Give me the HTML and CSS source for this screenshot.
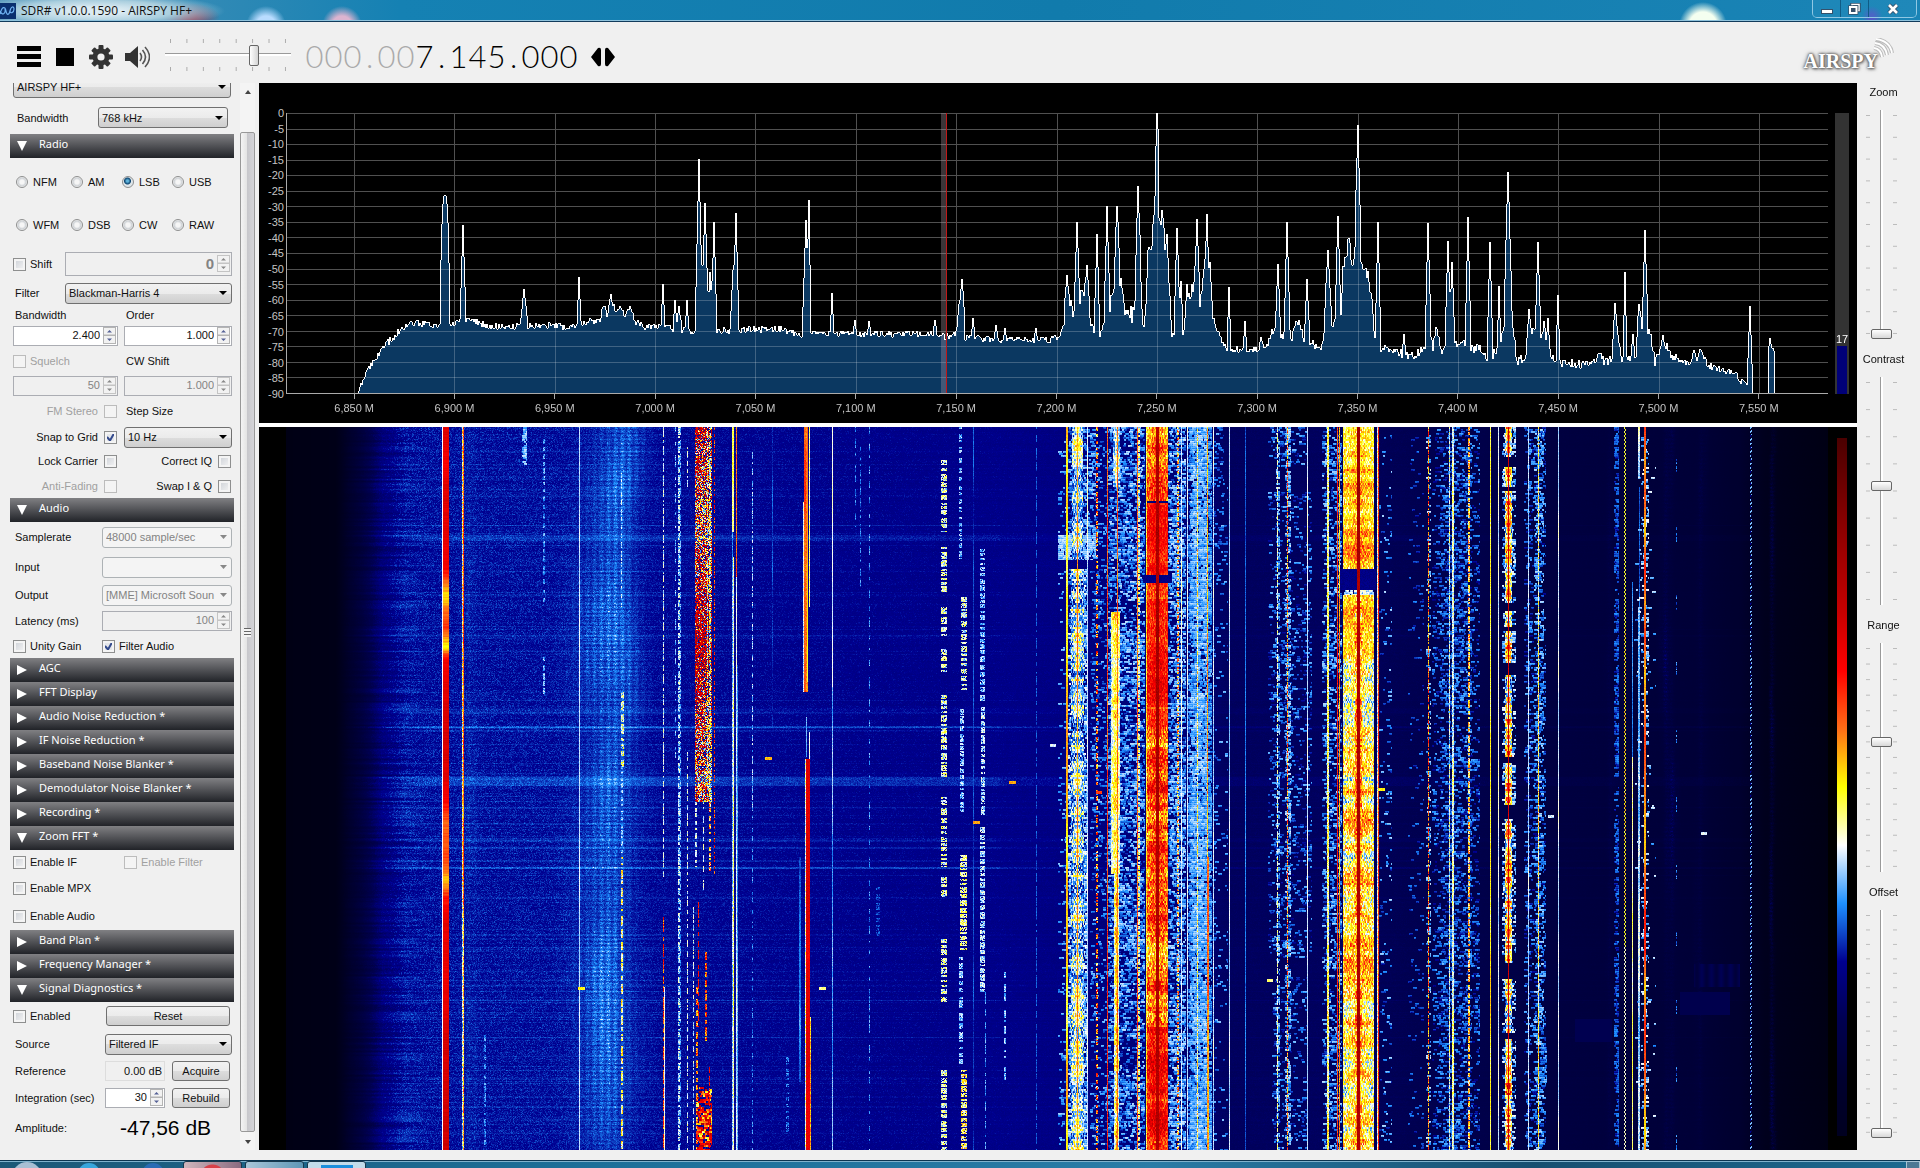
FILE: index.html
```html
<!DOCTYPE html>
<html lang="en">
<head>
<meta charset="utf-8">
<title>SDR# v1.0.0.1590 - AIRSPY HF+</title>
<link rel="stylesheet" href="styles.css">
</head>
<body>
<header class="titlebar">
  <svg class="app-icon" viewBox="0 0 16 16" aria-hidden="true"><rect width="16" height="16" fill="#0a2f6e"/><path d="M0 11 C2 3 5 3 6 8 C7 13 9 12 10 8 C11 3 14 3 14 6 C14 10 10 11 10 8 M0 8 C2 13 6 11 5 6" fill="none" stroke="#6fb2f2" stroke-width="1.2"/></svg>
  <h1 class="title">SDR# v1.0.0.1590 - AIRSPY HF+</h1>
  <div class="window-buttons">
    <button type="button" aria-label="Minimize"><svg width="12" height="12" viewBox="0 0 12 12"><rect x=".5" y="6.500" width="11" height="4" fill="#fff" stroke="#35506a"/></svg></button>
    <button type="button" aria-label="Restore"><svg width="13" height="12" viewBox="0 0 13 12"><rect x="4" y="1.500" width="7" height="6" fill="none" stroke="#35506a" stroke-width="3.500"/><rect x="4" y="1.500" width="7" height="6" fill="none" stroke="#fff" stroke-width="1.500"/><rect x="2" y="4" width="6.500" height="6" fill="#35506a" stroke="#35506a" stroke-width="3.500"/><rect x="2" y="4" width="6.500" height="6" fill="#35506a" stroke="#fff" stroke-width="2"/></svg></button>
    <button type="button" class="close" aria-label="Close"><svg width="12" height="12" viewBox="0 0 12 12"><path d="M2 2 L10 10 M10 2 L2 10" stroke="#35506a" stroke-width="4.500"/><path d="M2 2 L10 10 M10 2 L2 10" stroke="#fff" stroke-width="2.600"/></svg></button>
  </div>
</header>

<div class="toolbar">
  <button type="button" class="tool menu" aria-label="Menu"><svg width="24" height="22" viewBox="0 0 24 22"><path d="M0 0h24v5H0zM0 8h24v5H0zM0 16h24v5H0z"/></svg></button>
  <button type="button" class="tool stop" aria-label="Stop"><svg width="18" height="18" viewBox="0 0 18 18"><rect width="18" height="18"/></svg></button>
  <button type="button" class="tool gear" aria-label="Settings"><svg width="24" height="24" viewBox="-12 -12 24 24" fill="#333"><g><rect x="-2.500" y="-12" width="5" height="24" rx="1"/><rect x="-12" y="-2.500" width="24" height="5" rx="1"/></g><g transform="rotate(45)"><rect x="-2.500" y="-11.500" width="5" height="23" rx="1"/><rect x="-11.500" y="-2.500" width="23" height="5" rx="1"/></g><circle r="8.500"/><circle r="3.600" fill="#f0f0f0"/></svg></button>
  <button type="button" class="tool sound" aria-label="Mute"><svg width="25" height="24" viewBox="0 0 25 24"><path d="M0 8h5l8-7v22l-8-7H0z" fill="#333"/><path d="M15 8q3 4 0 8M17.500 5q6 7 0 14M20 2q9 10 0 20" fill="none" stroke="#555" stroke-width="1.600"/></svg></button>
  <div class="volume">
    <span class="hticks"></span>
    <input type="range" aria-label="Volume" min="0" max="100" value="72">
    <span class="hticks"></span>
  </div>
  <output class="frequency" aria-label="Frequency"><span class="off"><b>0</b><b>0</b><b>0</b><i>.</i><b>0</b><b>0</b></span><span><b>7</b><i>.</i><b>1</b><b>4</b><b>5</b><i>.</i><b>0</b><b>0</b><b>0</b></span></output>
  <button type="button" class="tool" aria-label="Tuning mode"><svg width="24" height="20" viewBox="0 0 24 20"><path d="M0 10 L7 1 Q10 0 10 3 V17 Q10 20 7 19zM24 10 L17 1 Q14 0 14 3 V17 Q14 20 17 19z"/></svg></button>
  <a class="logo" href="#airspy" aria-label="Airspy"><span>AIRSPY</span><svg width="22" height="20" viewBox="0 0 22 20"><g fill="none" stroke="#888" stroke-width="4" opacity=".5"><path d="M1 10q7 1 8 9M2 5q10 1 12 12M3 1q14 2 16 14"/></g><g fill="none" stroke="#fff" stroke-width="1.800"><path d="M1 10q7 1 8 9M2 5q10 1 12 12M3 1q14 2 16 14"/></g></svg></a>
</div>

<main class="workspace">
  <aside class="sidebar">
    <form class="panels">
      <section class="source">
        <select class="wide" aria-label="Source device"><option>AIRSPY HF+</option></select>
        <div class="row r36"><label for="src-bw">Bandwidth</label><select id="src-bw"><option>768 kHz</option></select></div>
      </section>

      <section>
        <button type="button" class="head open">Radio</button>
        <div class="modes">
          <label><input type="radio" name="mode">NFM</label><label><input type="radio" name="mode">AM</label><label><input type="radio" name="mode" checked>LSB</label><label><input type="radio" name="mode">USB</label>
          <label><input type="radio" name="mode">WFM</label><label><input type="radio" name="mode">DSB</label><label><input type="radio" name="mode">CW</label><label><input type="radio" name="mode">RAW</label>
        </div>
        <div class="row c65 r36"><label class="check"><input type="checkbox">Shift</label><input class="spin tall" type="text" aria-label="Shift frequency" value="0" disabled></div>
        <div class="row c65 r22"><label for="filter">Filter</label><select id="filter"><option>Blackman-Harris 4</option></select></div>
        <div class="row half r22"><label for="bw">Bandwidth</label><label for="order" class="in">Order</label></div>
        <div class="row half r20"><input class="spin" id="bw" type="text" value="2.400"><input class="spin" id="order" type="text" value="1.000"></div>
        <div class="row half r30"><label class="check off"><input type="checkbox" disabled>Squelch</label><label for="cw" class="in">CW Shift</label></div>
        <div class="row half r20"><input class="spin" type="text" aria-label="Squelch level" value="50" disabled><input class="spin" id="cw" type="text" value="1.000" disabled></div>
        <div class="row half r30"><label class="check after off">FM Stereo<input type="checkbox" disabled></label><label for="step" class="in">Step Size</label></div>
        <div class="row half r22"><label class="check after">Snap to Grid<input type="checkbox" checked></label><select id="step"><option>10 Hz</option></select></div>
        <div class="row half r26"><label class="check after">Lock Carrier<input type="checkbox"></label><label class="check after">Correct IQ<input type="checkbox"></label></div>
        <div class="row half r24"><label class="check after off">Anti-Fading<input type="checkbox" disabled></label><label class="check after">Swap I &amp; Q<input type="checkbox"></label></div>
      </section>

      <section>
        <button type="button" class="head open">Audio</button>
        <div class="row c102 r30"><label for="rate">Samplerate</label><select id="rate" disabled><option>48000 sample/sec</option></select></div>
        <div class="row c102 r30"><label for="ain">Input</label><select id="ain" disabled><option></option></select></div>
        <div class="row c102 r26"><label for="aout">Output</label><select id="aout" disabled><option>[MME] Microsoft Soun</option></select></div>
        <div class="row c102 r26"><label for="lat">Latency (ms)</label><input class="spin" id="lat" type="text" value="100" disabled></div>
        <div class="row c102 r24"><label class="check"><input type="checkbox">Unity Gain</label><label class="check"><input type="checkbox" checked>Filter Audio</label></div>
      </section>

      <section>
        <button type="button" class="head">AGC</button>
        <button type="button" class="head">FFT Display</button>
        <button type="button" class="head">Audio Noise Reduction *</button>
        <button type="button" class="head">IF Noise Reduction *</button>
        <button type="button" class="head">Baseband Noise Blanker *</button>
        <button type="button" class="head">Demodulator Noise Blanker *</button>
        <button type="button" class="head">Recording *</button>
      </section>

      <section>
        <button type="button" class="head open">Zoom FFT *</button>
        <div class="row half r24"><label class="check"><input type="checkbox">Enable IF</label><label class="check off"><input type="checkbox" disabled>Enable Filter</label></div>
        <div class="row r28"><label class="check"><input type="checkbox">Enable MPX</label></div>
        <div class="row r28"><label class="check"><input type="checkbox">Enable Audio</label></div>
      </section>

      <section>
        <button type="button" class="head">Band Plan *</button>
        <button type="button" class="head">Frequency Manager *</button>
      </section>

      <section>
        <button type="button" class="head open">Signal Diagnostics *</button>
        <div class="row c105 r28"><label class="check"><input type="checkbox">Enabled</label><button type="button" class="push">Reset</button></div>
        <div class="row c105 r28"><label for="diag">Source</label><select id="diag"><option>Filtered IF</option></select></div>
        <div class="row c105b r26"><label for="ref">Reference</label><input class="plain" id="ref" type="text" value="0.00 dB" readonly><button type="button" class="push">Acquire</button></div>
        <div class="row c105b r28"><label for="integ">Integration (sec)</label><input class="spin" id="integ" type="text" value="30"><button type="button" class="push">Rebuild</button></div>
        <div class="row c105 r32"><label for="amp">Amplitude:</label><output class="amplitude" id="amp">-47,56 dB</output></div>
      </section>
    </form>
    <div class="scrollbar" aria-hidden="true"><span class="arrow up"></span><span class="thumb"></span><span class="arrow down"></span></div>
  </aside>

  <div class="displays">
    <section class="spectrum" aria-label="Spectrum">
      <div class="db-scale"><span>0</span><span>-5</span><span>-10</span><span>-15</span><span>-20</span><span>-25</span><span>-30</span><span>-35</span><span>-40</span><span>-45</span><span>-50</span><span>-55</span><span>-60</span><span>-65</span><span>-70</span><span>-75</span><span>-80</span><span>-85</span><span>-90</span></div>
      <canvas id="spectrum" width="1542" height="281"></canvas>
      <div class="meter"><span>17</span><i></i></div>
      <div class="freq-scale"><span>6,850 M</span><span>6,900 M</span><span>6,950 M</span><span>7,000 M</span><span>7,050 M</span><span>7,100 M</span><span>7,150 M</span><span>7,200 M</span><span>7,250 M</span><span>7,300 M</span><span>7,350 M</span><span>7,400 M</span><span>7,450 M</span><span>7,500 M</span><span>7,550 M</span></div>
    </section>
    <section class="waterfall" aria-label="Waterfall">
      <div class="canvas-box"><canvas id="waterfall" width="1542" height="723"></canvas></div>
      <div class="palette"></div>
    </section>
  </div>

  <aside class="levels">
    <div class="level s10"><label for="zoom">Zoom</label><span class="vticks"></span><input id="zoom" type="range" min="0" max="100" value="0"><span class="vticks"></span></div>
    <div class="level s8"><label for="contrast">Contrast</label><span class="vticks"></span><input id="contrast" type="range" min="0" max="100" value="52"><span class="vticks"></span></div>
    <div class="level s14"><label for="range">Range</label><span class="vticks"></span><input id="range" type="range" min="0" max="100" value="57"><span class="vticks"></span></div>
    <div class="level s15"><label for="offset">Offset</label><span class="vticks"></span><input id="offset" type="range" min="0" max="100" value="0"><span class="vticks"></span></div>
  </aside>
</main>

<footer class="taskbar">
  <button type="button" class="orb" aria-label="Start"></button>
  <button type="button" class="dot ie" aria-label="Browser"></button>
  <button type="button" class="dot bird" aria-label="Mail"></button>
  <button type="button" class="task red" aria-label="Opera"></button>
  <button type="button" class="task" aria-label="Explorer"></button>
  <button type="button" class="task active" aria-label="SDR#"></button>
  <span class="show-desktop"></span>
</footer>
<script src="app.js"></script>
</body>
</html>
```
FILE: styles.css
```css
* { box-sizing: border-box; }

body {
  margin: 0;
  height: 100vh;
  display: flex;
  flex-direction: column;
  overflow: hidden;
  background: #f0f0f0;
  color: #111;
  font: 11px/14px "Liberation Sans", Arial, sans-serif;
}

button, input, select { font: inherit; color: inherit; margin: 0; }

/* title bar */
.titlebar {
  flex: none;
  height: 22px;
  display: flex;
  align-items: center;
  gap: 5px;
  border-bottom: 1px solid #123c5c;
  box-shadow: inset 0 -1px #8fc3dd;
  background:
    radial-gradient(circle at 266px 26px, #b9dcff 10px, transparent 20px),
    radial-gradient(circle at 342px 26px, #dcb4d0 10px, transparent 20px),
    radial-gradient(circle at 1703px 26px, #f4fff0 14px, transparent 24px),
    radial-gradient(circle at 1872px 16px, #5a52c8 2px, transparent 10px),
    radial-gradient(130px 18px at 95px 11px, #dcebf2 20%, #a9cede 60%, transparent),
    radial-gradient(30px 14px at 190px 17px, #8d4a62 20%, transparent),
    linear-gradient(90deg, #4f93b8 0, #1581b3 400px, #117bac 55%, #1a84b6);
}
.app-icon { width: 16px; height: 16px; }
.title { margin: 0; flex: 1; font: 400 12px/18px "Open Sans", sans-serif; }
.window-buttons {
  align-self: flex-start;
  display: flex;
  height: 18px;
  margin-right: 3px;
  border: 1px solid #8fc8e4;
  border-top: 0;
  border-radius: 0 0 5px 5px;
}
.window-buttons button {
  width: 28px;
  padding: 0;
  border: 0;
  border-right: 1px solid #0f5c86;
  background: #2a8fbf55;
  display: grid;
  place-items: center;
}
.window-buttons .close { width: 47px; border-right: 0; }

/* toolbar */
.toolbar {
  flex: none;
  height: 61px;
  display: flex;
  align-items: center;
  padding: 9px 25px 0 17px;
}
.tool { padding: 0; border: 0; background: none; display: grid; }
.menu { margin-right: 15px; }
.stop { margin-right: 15px; }
.gear { margin-right: 12px; }
.sound { margin-right: 15px; }
.volume { width: 126px; margin: 0 14px 4px 0; display: grid; gap: 1px; }
.hticks {
  height: 4px;
  margin: 0 5px;
  background: linear-gradient(90deg, #aaa 1px, transparent 1px) 0 0 / calc((100% - 1px) / 7) 4px repeat-x;
}
.volume input {
  appearance: none;
  width: 100%;
  height: 22px;
  background: linear-gradient(#9a9a9a 1px, #fff 1px, #fff 3px, transparent 3px) 0 9px / 100% 4px no-repeat;
}
.volume input::-webkit-slider-thumb {
  appearance: none;
  width: 10px;
  height: 21px;
  border: 1px solid #666;
  border-radius: 2px;
  background: linear-gradient(90deg, #fff, #d4d4d4);
}
.frequency { display: flex; margin: 0 13px 2px 0; font: 300 31px/36px Lato, "Open Sans", sans-serif; color: #000; }
.frequency span { display: flex; }
.frequency .off { color: #aaa; }
.frequency b, .frequency i { width: 19px; font-weight: 300; font-style: normal; text-align: center; }
.frequency i { width: 15px; }
.logo {
  margin: 7px 0 0 auto;
  display: flex;
  align-items: center;
  color: #fff;
  text-decoration: none;
  font: 700 20px/22px "Liberation Serif", serif;
  text-shadow: 0 0 2px #666, 0 0 3px #666, 0 0 5px #777, 1px 1px 3px #666;
}
.logo svg { margin: -26px 0 0 -5px; }

/* workspace */
.workspace { flex: 1; min-height: 0; display: flex; padding-bottom: 10px; }
.sidebar { flex: none; width: 259px; display: flex; padding-left: 10px; }
.panels { width: 224px; overflow: hidden; }
.source { margin-top: -7px; padding: 0 3px; }
.source .wide { display: block; width: 218px; height: 22px; }
.source .row { grid-template-columns: 83px 130px; padding: 3px 0 0 2px; }
.row {
  display: grid;
  align-items: center;
  padding: 0 2px 0 3px;
}
.row > label { padding-left: 2px; }
.r20 { height: 20px; } .r22 { height: 22px; } .r24 { height: 24px; } .r26 { height: 26px; }
.r28 { height: 28px; } .r30 { height: 30px; } .r32 { height: 32px; } .r36 { height: 36px; }
.c65 { grid-template-columns: 52px 1fr; }
.half { grid-template-columns: 105px 1fr; column-gap: 6px; }
.half .in { padding-left: 2px; }
.c102 { grid-template-columns: 89px 1fr; }
.c105 { grid-template-columns: 92px 1fr; }
.c105b { grid-template-columns: 92px 60px 1fr; }
.c105b .push { margin-left: 7px; }
.row > .check { display: flex; align-items: center; gap: 4px; padding-left: 0; }
.row > .check.after { justify-content: flex-end; gap: 6px; padding-right: 1px; }
.off { color: #a0a0a0; }

.head {
  display: block;
  width: 100%;
  height: 24px;
  padding: 0 0 4px 29px;
  border: 0;
  text-align: left;
  color: #fff;
  font: 11px/20px "Noto Sans", "Open Sans", sans-serif;
  background:
    url("data:image/svg+xml,%3Csvg xmlns='http://www.w3.org/2000/svg' width='10' height='10'%3E%3Cpath d='M0 0L10 5L0 10z' fill='white'/%3E%3C/svg%3E") 7px 7px no-repeat,
    linear-gradient(#808083, #55565a 45%, #212328);
}
.head.open {
  background:
    url("data:image/svg+xml,%3Csvg xmlns='http://www.w3.org/2000/svg' width='10' height='10'%3E%3Cpath d='M0 0H10L5 10z' fill='white'/%3E%3C/svg%3E") 7px 7px no-repeat,
    linear-gradient(#808083, #55565a 45%, #212328);
}

.modes { display: grid; grid-template-columns: 55px 51px 50px 1fr; grid-auto-rows: 43px; padding: 2px 0 0 6px; }
.modes label { display: flex; align-items: center; gap: 5px; }
input[type="radio"], input[type="checkbox"] { appearance: none; flex: none; border: 1px solid #8e8f8f; }
input[type="radio"] {
  width: 12px;
  height: 12px;
  border-radius: 50%;
  background: radial-gradient(#f6f6f6 2px, #ccd0d4 4px, #f4f4f4 5px);
}
input[type="radio"]:checked { background: radial-gradient(circle at 45% 40%, #5fb4dc 1px, #0c4470 3px, #dfe6ea 4px); }
input[type="checkbox"] {
  width: 13px;
  height: 13px;
  background: linear-gradient(135deg, #cbcfd5, #f6f6f6);
  box-shadow: inset 0 0 0 2px #f4f4f4;
}
input[type="checkbox"]:checked {
  background: url("data:image/svg+xml,%3Csvg xmlns='http://www.w3.org/2000/svg' width='11' height='11'%3E%3Cpath d='M2 5L5 8.500L9 1.500' fill='none' stroke='%23334a8c' stroke-width='2'/%3E%3C/svg%3E") center no-repeat #e4e6ea;
}
input[type="checkbox"]:disabled { border-color: #bcbcbc; background: #f4f4f4; }

select {
  appearance: none;
  width: 100%;
  height: 21px;
  padding: 0 16px 0 3px;
  border: 1px solid #707070;
  border-radius: 3px;
  background:
    url("data:image/svg+xml,%3Csvg xmlns='http://www.w3.org/2000/svg' width='8' height='4'%3E%3Cpath d='M0 0H8L4 4z'/%3E%3C/svg%3E") right 4px center no-repeat,
    linear-gradient(#f2f2f2, #ebebeb 50%, #dddddd 50%, #cfcfcf);
}
select:disabled {
  opacity: 1;
  padding-right: 0;
  color: #838383;
  border-color: #adb2b5;
  background:
    url("data:image/svg+xml,%3Csvg xmlns='http://www.w3.org/2000/svg' width='7' height='4'%3E%3Cpath d='M0 0H7L3.500 4z' fill='%23888'/%3E%3C/svg%3E") right 4px center no-repeat,
    #f4f4f4;
}
.spin, .plain {
  width: 100%;
  height: 20px;
  padding: 0 17px 2px 2px;
  border: 1px solid #abadb3;
  text-align: right;
  background:
    url("data:image/svg+xml,%3Csvg xmlns='http://www.w3.org/2000/svg' width='14' height='18'%3E%3Crect x='.5' y='.5' width='12' height='7.500' fill='%23f2f2f2' stroke='%23b4b4b4'/%3E%3Crect x='.5' y='8.500' width='12' height='8' fill='%23f2f2f2' stroke='%23b4b4b4'/%3E%3Cpath d='M4 5.500L6.500 3L9 5.500zM4 11.500L6.500 14L9 11.500z' fill='%23556196'/%3E%3C/svg%3E") right 0 center no-repeat,
    #fff;
}
.spin:disabled {
  color: #838383;
  background:
    url("data:image/svg+xml,%3Csvg xmlns='http://www.w3.org/2000/svg' width='14' height='18'%3E%3Crect x='.5' y='.5' width='12' height='7.500' fill='%23f2f2f2' stroke='%23c4c4c4'/%3E%3Crect x='.5' y='8.500' width='12' height='8' fill='%23f2f2f2' stroke='%23c4c4c4'/%3E%3Cpath d='M4 5.500L6.500 3L9 5.500zM4 11.500L6.500 14L9 11.500z' fill='%23888'/%3E%3C/svg%3E") right 0 center no-repeat,
    #f0f0f0;
}
.tall { height: 24px; font-size: 15px; font-weight: 700; }
.plain { padding: 0 2px 0 0; border-color: #ddd; background: #f0f0f0; }
.push {
  height: 20px;
  margin: 0 2px 0 1px;
  padding: 0;
  border: 1px solid #707070;
  border-radius: 3px;
  background: linear-gradient(#f2f2f2, #ebebeb 50%, #dddddd 50%, #cfcfcf);
}
.amplitude { padding-left: 15px; font-size: 21px; line-height: 24px; color: #000; }

.scrollbar { width: 15px; margin-left: 6px; display: flex; flex-direction: column; background: #f4f4f4; }
.arrow { height: 49px; background: url("data:image/svg+xml,%3Csvg xmlns='http://www.w3.org/2000/svg' width='6' height='4'%3E%3Cpath d='M0 4H6L3 0z' fill='%23444'/%3E%3C/svg%3E") 5px 7px no-repeat; }
.arrow.down { height: 18px; background: url("data:image/svg+xml,%3Csvg xmlns='http://www.w3.org/2000/svg' width='6' height='4'%3E%3Cpath d='M0 0H6L3 4z' fill='%23444'/%3E%3C/svg%3E") 5px 8px no-repeat; }
.thumb {
  flex: 1;
  border: 1px solid #989898;
  border-radius: 2px;
  background:
    repeating-linear-gradient(#666 0 1px, #f4f4f4 1px 3px) center / 7px 9px no-repeat,
    linear-gradient(90deg, #f4f4f4, #e4e4e4 45%, #c8c8cc 50%, #d4d4d8);
}

/* displays */
.displays { flex: 1; min-width: 0; display: flex; flex-direction: column; gap: 4px; background: #fff; }
.spectrum {
  flex: none;
  display: grid;
  grid-template: 281px 29px / 27px 1fr 29px;
  padding-top: 30px;
  background: #000;
  color: #c4c4c4;
}
.spectrum canvas { width: 100%; height: 281px; }
.db-scale {
  display: flex;
  flex-direction: column;
  justify-content: space-between;
  margin: -5px 2px -5px 0;
  text-align: right;
  line-height: 10px;
}
.meter {
  width: 14px;
  margin-left: 7px;
  display: flex;
  flex-direction: column;
  justify-content: flex-end;
  align-items: center;
  background: #333;
  color: #fff;
}
.meter i { width: 10px; height: 48px; background: #000078; }
.freq-scale { grid-column: 2; display: flex; padding: 0 19px 0 18px; }
.freq-scale span { flex: 1; text-align: center; }
.freq-scale span::before { content: ""; display: block; width: 1px; height: 5px; margin: 0 auto 2px; background: #aaa; }

.waterfall { flex: 1; min-height: 0; display: grid; grid-template-columns: 27px 1fr 29px; background: #000; }
.canvas-box { grid-column: 2; min-height: 0; }
.canvas-box canvas { display: block; width: 100%; height: 100%; }
.palette {
  width: 10px;
  margin: 11px 0 14px 9px;
  background: linear-gradient(#4a0000, #750000, #9f0000, #c60000, #ff0000, #fe6d16, #ffff00, #ffffff, #1e90ff, #000091, #000050, #000030, #000020);
}

/* level sliders */
.levels { flex: none; width: 63px; display: flex; flex-direction: column; padding-bottom: 1px; }
.level {
  flex: 1;
  display: grid;
  grid-template: 18px 1fr / 4px 23px 4px;
  justify-content: center;
  row-gap: 9px;
  padding: 0 14px 11px 0;
}
.level label { grid-column: 1 / -1; justify-self: center; margin: 2px -20px 0 -16px; }
.vticks {
  margin: 5px 0;
  background: linear-gradient(#bbb 1px, transparent 1px) 0 0 / 4px calc((100% - 1px) / var(--steps)) repeat-y;
}
.s8 { --steps: 8; } .s10 { --steps: 10; } .s14 { --steps: 14; } .s15 { --steps: 15; }
.level input {
  appearance: none;
  writing-mode: vertical-lr;
  direction: rtl;
  width: 23px;
  height: 100%;
  background: linear-gradient(90deg, #9a9a9a 1px, #fff 1px) 10px 0 / 3px 100% no-repeat;
}
.level input::-webkit-slider-thumb {
  appearance: none;
  width: 21px;
  height: 10px;
  border: 1px solid #666;
  border-radius: 2px;
  background: linear-gradient(#fff, #d8d8d8);
}

/* taskbar */
.taskbar {
  flex: none;
  height: 8px;
  display: flex;
  align-items: flex-start;
  overflow: hidden;
  border-top: 1px solid #0c3550;
  box-shadow: inset 0 1px #7fb2cc;
  background: linear-gradient(90deg, #1c5877, #1c6f98 30%, #2a7ca6 60%, #164f70 80%, #1d6a90);
}
.taskbar button { padding: 0; border: 0; flex: none; }
.orb { width: 30px; height: 30px; margin: 1px 36px 0 12px; border-radius: 50%; background: #a8bfd4; }
.dot { width: 22px; height: 22px; margin: 2px 42px 0 0; border-radius: 50%; background: #38a6dc; }
.dot.bird { margin-right: 19px; background: #2a6cb4; }
.taskbar .task { width: 59px; height: 30px; margin-right: 3px; border: 1px solid #16384c; border-radius: 3px; background: linear-gradient(90deg, #a9c6d8, #5e97b6); }
.taskbar .red { background: radial-gradient(circle at 50% 15px, #fff 5px, #d84048 6px, #d84048 12px, transparent 13px), linear-gradient(90deg, #d0b6bc, #8a6a80); }
.taskbar .active { background: linear-gradient(#1c8fdc, #1c8fdc) center 3px / 32px 20px no-repeat, #c2dcea; }
.show-desktop { width: 14px; height: 8px; margin-left: auto; border: 1px solid #a8c4d4; background: #4c7894; }
```
FILE: app.js
```js
// Visible FFT bins: 286 .. 1828
const FIRST = 286, BINS = 1542, ROWS = 723;

let seed = 7145;
function rnd() {
  seed = (seed + 0x6D2B79F5) | 0;
  let t = Math.imul(seed ^ (seed >>> 15), 1 | seed);
  t = (t + Math.imul(t ^ (t >>> 7), 61 | t)) ^ t;
  return ((t ^ (t >>> 14)) >>> 0) / 4294967296;
}
function interp(points, x) {
  if (x <= points[0][0]) return points[0][1];
  for (let i = 1; i < points.length; i++) {
    if (x <= points[i][0]) {
      const [x0, y0] = points[i - 1], [x1, y1] = points[i];
      return y0 + (y1 - y0) * (x - x0) / (x1 - x0);
    }
  }
  return points[points.length - 1][1];
}

/* ---------- spectrum ---------- */
const floor = [[357,-91],[358,-90],[363,-86],[368,-82.5],[373,-80],[379,-77.5],[386,-74.5],[393,-72],[400,-70],[406,-68.7],[415,-67.3],[425,-68],[439,-68.3],[455,-67.5],[470,-66.5],[480,-67.5],[492,-68.5],[510,-68.5],[555,-68],[570,-69.2],[580,-67.5],[600,-66.5],[604,-61.5],[607,-65.5],[611,-59],[616,-64],[619,-62],[624,-65],[630,-63],[636,-67],[645,-69],[660,-68],[670,-69],[690,-70],[720,-70],[745,-69.5],[780,-69.5],[800,-71],[815,-70.5],[850,-71],[930,-71],[946,-72],[956,-71],[959,-62],[963,-64],[965,-72],[1000,-73],[1050,-73],[1058,-72],[1063,-69],[1067,-62],[1070,-61],[1074,-65],[1080,-60],[1085,-58],[1090,-66],[1095,-71],[1100,-72],[1103,-68],[1110,-62],[1115,-55],[1117,-45],[1120,-53],[1125,-63],[1132,-65],[1137,-55],[1140,-50],[1143,-69],[1146,-64],[1148,-45],[1149,-41],[1151,-44],[1154,-32],[1156,-22],[1157,-5],[1158,-14],[1159,-33],[1161,-36],[1163,-32],[1166,-46],[1169,-56],[1172,-72],[1174,-72],[1178,-64],[1183,-70],[1188,-62],[1192,-56],[1196,-58],[1202,-61],[1207,-62],[1212,-66],[1218,-70],[1224,-75],[1230,-76],[1257,-76],[1268,-74],[1274,-69],[1280,-73],[1288,-69],[1292,-73],[1295,-68],[1300,-67],[1304,-74],[1322,-75],[1326,-66],[1332,-69],[1337,-63],[1341,-64],[1343,-51],[1347,-45],[1349,-41],[1353,-51],[1356,-35],[1360,-45],[1366,-50],[1371,-59],[1375,-72],[1378,-75],[1400,-77],[1410,-78.5],[1424,-76],[1430,-70],[1433,-76],[1436,-68],[1442,-78],[1447,-72],[1455,-74],[1462,-73],[1472,-76],[1480,-75],[1486,-79],[1495,-77],[1500,-76],[1504,-68],[1508,-57],[1512,-65],[1517,-80],[1527,-78],[1532,-70],[1540,-72],[1546,-73],[1552,-79],[1565,-80.5],[1592,-80.5],[1600,-77],[1605,-80],[1612,-79],[1618,-70],[1622,-80],[1636,-78],[1640,-69],[1650,-70],[1655,-80],[1664,-74],[1672,-78],[1690,-81],[1694,-77],[1697,-80],[1700,-76],[1708,-81],[1737,-84],[1740,-86],[1749,-88],[1750,-90],[1768,-91],[1769,-75],[1770,-73],[1774,-77],[1775,-91]];
// bin, level in dB, half width
const peaks = [[445,-26.5,4],[463,-36,2],[524,-56.5,3],[579,-52.7,1],[663,-55,1],[675,-60,1],[679,-62,2],[687,-60,1],[699,-14.7,3],[705,-29,3],[710,-51,2],[714,-35,2],[733,-50.5,2],[736,-32,2],[806,-34.5,3],[809,-28,1],[832,-57.8,1],[855,-66.5,1],[869,-67,1],[935,-66.5,1],[962,-53.5,2],[973,-66,1],[996,-68,1],[1005,-69,1],[1036,-69,1],[1067,-52,2],[1077,-35,2],[1087,-49,2],[1097,-39,2],[1107,-30,2],[1117,-30,2],[1138,-23.5,2],[1157,1,1],[1167,-39,1],[1177,-37,2],[1181,-54,1],[1187,-55,1],[1197,-34,2],[1204,-50,2],[1207,-32.5,2],[1210,-48,2],[1229,-56,1],[1245,-67,1],[1261,-72,1],[1278,-48.5,2],[1287,-35,2],[1307,-53.5,2],[1328,-44,3],[1338,-33,2],[1358,-4,2],[1378,-35,2],[1404,-71,1],[1428,-35.5,2],[1448,-41,2],[1452,-48,2],[1468,-33.5,2],[1490,-41.5,2],[1499,-55.5,1],[1508,-19,3],[1529,-63,2],[1538,-41.5,2],[1544,-67,1],[1548,-66,1],[1558,-58.5,1],[1615,-61,2],[1625,-51,1],[1633,-71,1],[1639,-61.5,2],[1645,-37.5,2],[1663,-71.5,1],[1750,-62,2]];

function drawSpectrum() {
  const g = document.getElementById("spectrum").getContext("2d");
  const H = 280, level = [];
  for (let i = 0; i < BINS; i++) {
    const x = i + FIRST;
    let v = interp(floor, x);
    const busy = v > -66 && x > 1060 ? 6 : x > 1060 && x < 1220 || x > 1260 && x < 1690 ? 3 : 2.2;
    if (v > -90) v += (rnd() - 0.5) * busy;
    level.push(v);
  }
  for (const [x, top, w] of peaks) {
    for (let d = -w; d <= w; d++) {
      const i = x - FIRST + d, base = level[i];
      const k = w > 3 ? Math.pow(Math.abs(d) / (w + 1), 3) : Math.abs(d) / (w + 1);
      level[i] = Math.max(base, top + (base - top) * k);
    }
  }
  const y = level.map(v => Math.min(H, Math.max(0, Math.round(-v * H / 90))));
  function grid(color, columnsOnly) {
    g.fillStyle = color;
    for (let k = 0; k < 15; k++) {
      const gx = Math.round(68 + k * 100.36);
      g.fillRect(gx, columnsOnly ? y[gx] : 0, 1, columnsOnly ? H - y[gx] : H);
    }
    for (let k = 0; k <= 18; k++) {
      const gy = Math.round(k * H / 18);
      if (!columnsOnly) g.fillRect(0, gy, BINS, 1);
      else for (let i = 0; i < BINS; i++) if (y[i] < gy) g.fillRect(i, gy, 1, 1);
    }
  }
  grid("#505050", false);
  g.fillStyle = "#0b3861";
  for (let i = 0; i < BINS; i++) g.fillRect(i, y[i], 1, H - y[i]);
  grid("rgba(255,255,255,.22)", true);
  g.fillStyle = "rgba(170,150,160,.35)";
  g.fillRect(655, 0, 5, H);
  g.fillStyle = "#fff";
  for (let i = 0; i < BINS - 1; i++) {
    if (y[i] >= H && y[i + 1] >= H) continue;
    const a = Math.min(y[i], y[i + 1]), b = Math.max(y[i], y[i + 1]);
    g.fillRect(i, a, 1, Math.max(1, b - a));
  }
  g.fillStyle = "#c01818";
  g.fillRect(660, 0, 1, H);
  g.fillStyle = "#aaa";
  g.fillRect(0, 0, 1, H);
  g.fillRect(0, H, BINS, 1);
}

/* ---------- waterfall ---------- */
const ramp = [[0,0,32],[0,0,48],[0,0,80],[0,0,145],[30,144,255],[255,255,255],[255,255,0],[254,109,22],[255,0,0],[198,0,0],[159,0,0],[117,0,0],[74,0,0]];
const cell = new Float32Array(BINS * ROWS);
function put(x, t, v) {
  x = Math.round(x - FIRST);
  if (x >= 0 && x < BINS && t >= 0 && t < ROWS) cell[(t | 0) * BINS + x] = v;
}
function lift(x, t, v) {
  x = Math.round(x - FIRST);
  if (x >= 0 && x < BINS && t >= 0 && t < ROWS) {
    const k = (t | 0) * BINS + x;
    if (cell[k] < v) cell[k] = v;
  }
}
function smooth(step) {
  const p = [];
  for (let t = -step; t <= ROWS + step; t += step) p.push([t, rnd() * 2 - 1]);
  const out = [];
  for (let t = 0; t < ROWS; t++) out.push(interp(p, t));
  return out;
}

function background() {
  const base = [[286,0.1],[335,0.2],[362,1.4],[382,2.6],[405,3.08],[560,3.08],[700,3],[850,2.9],[1000,2.85],[1060,2.75],[1200,2.5],[1230,2.2],[1340,2.2],[1450,1.9],[1560,1.5],[1700,1.2],[1740,0.9],[1765,0.4],[1828,0.1]];
  const noise = [[330,0],[370,0.25],[400,0.75],[560,0.7],[600,0.6],[700,0.5],[850,0.4],[1000,0.3],[1200,0.2],[1500,0.12],[1760,0.05]];
  const b = [], n = [], edge = smooth(2);
  for (let x = 0; x < BINS; x++) { b.push(interp(base, x + FIRST)); n.push(interp(noise, x + FIRST)); }
  const streaks = [[98,1,.3],[108,6,.22],[202,1,.2],[208,2,.2],[281,5,.15],[299,2,.5],[303,1,.2],[350,9,.42],[380,1,.25],[411,4,.2],[420,2,.3],[433,2,.2],[440,2,.55],[448,1,.25],[470,2,.15],[573,1,.3],[610,1,.25],[650,2,.12]];
  const extra = new Float32Array(ROWS);
  for (const [t, h, a] of streaks) for (let k = 0; k < h; k++) extra[t + k] += a;
  for (let t = 0; t < ROWS; t++) {
    const jitter = (rnd() - 0.5) * 0.12 + (rnd() < 0.12 ? 0.15 : 0);
    for (let x = 0; x < BINS; x++) {
      const X = x + FIRST;
      let v = b[x];
      if (X > 340 && X < 430) v += edge[t] * 0.35 * Math.min(1, (X - 340) / 30) * Math.min(1, (430 - X) / 30);
      v += (jitter * Math.min(1, n[x] * 2)) + (rnd() * rnd() - 0.2) * n[x];
      const fade = X < 370 ? Math.max(0, (X - 340) / 30) : X < 1000 ? 1 : X < 1560 ? 0.6 : X < 1750 ? 0.5 : 0;
      v += extra[t] * fade * (0.6 + rnd() * 0.7);
      cell[t * BINS + x] = Math.max(0, v);
    }
  }
}

// broad soft hump with a woven texture
function haze(center, half, gain, wander) {
  const w = smooth(90), g = smooth(60);
  for (let t = 0; t < ROWS; t++) {
    const c = center + w[t] * wander;
    for (let x = -half; x <= half; x++) {
      const X = Math.round(c + x) - FIRST;
      if (X < 0 || X >= BINS) continue;
      const weave = (0.75 + 0.25 * Math.cos(X * 2 * Math.PI / 7)) * (0.75 + 0.25 * Math.cos(t * 2 * Math.PI / 4));
      const fall = Math.exp(-3 * x * x / (half * half));
      cell[t * BINS + X] += gain * (0.85 + 0.5 * g[t]) * fall * weave * (0.4 + rnd());
    }
  }
}
function line(x, w, v, t0 = 0, t1 = ROWS, spread = 0.5, drift = 0.4) {
  const s = smooth(35);
  for (let t = t0; t < t1; t++) for (let k = 0; k < w; k++) put(x + k, t, v + s[t] * drift + (rnd() - 0.5) * spread);
}
function dash(x, w, v, t0 = 0, t1 = ROWS, on = 8, off = 6, spread = 1.2) {
  let t = t0;
  while (t < t1) {
    const end = Math.min(t1, t + 1 + rnd() * on);
    for (; t < end; t++) for (let k = 0; k < w; k++) if (w < 3 || rnd() < 0.88) put(x + k, t, v + (rnd() - 0.5) * spread);
    t = Math.ceil(t + rnd() * off);
  }
}
function cloud(x0, x1, v, spread, density, t0 = 0, t1 = ROWS) {
  const g = smooth(14);
  for (let t = t0; t < t1; t += 2) {
    for (let x = x0; x < x1; x++) {
      if (rnd() > density * (1 + 0.6 * g[t])) continue;
      const w = 1 + rnd() * 3, val = v + (rnd() - 0.5) * spread;
      for (let k = 0; k < w && x + k < x1; k++) { lift(x + k, t, val); lift(x + k, t + 1, val - rnd() * 0.5); }
    }
  }
}
// symmetric AM channel
function am(center, half, v, spread, slope, t0, t1) {
  const g = smooth(7), slow = smooth(60);
  for (let t = t0; t < t1; t += 2) {
    const wide = half + Math.round(rnd() - 0.5);
    for (let d = 0; d <= wide; d++) {
      const val = v + g[t] * spread * 0.45 + slow[t] * 0.4 - slope * d / half + (rnd() - 0.5) * spread;
      for (const x of [center - d, center + d]) {
        const e = (rnd() - 0.5) * 0.6;
        put(x, t, val + e);
        put(x, t + 1, val + e * 2);
      }
    }
  }
}
function gap(x0, x1, t0, t1) {
  for (let t = t0; t < t1; t++) for (let x = x0; x < x1; x++) put(x, t, 2.6 + rnd() * 0.4);
}
function blip(x, t, v, w = 7) {
  for (let a = 0; a < 3; a++) for (let k = 0; k < w; k++) put(x + k, t + a, v + (rnd() - 0.5) * 0.6);
}

function signals() {
  haze(613, 50, 0.8, 12);
  haze(613, 26, 0.55, 16);
  haze(470, 12, 0.22, 2);
  haze(1668, 9, 0.9, 4);
  haze(1772, 4, 1.7, 1);
  haze(1700, 7, 0.4, 3);
  haze(1610, 6, 0.3, 2);

  // strong carrier at 6.895 MHz
  const heat = [[0,8.6],[40,8.1],[60,8.6],[140,8.2],[155,7],[168,6.2],[180,6.8],[200,7.6],[219,6],[232,8.2],[290,8.7],[350,8.6],[375,8],[395,7.1],[430,7.4],[455,6.4],[470,7.8],[490,8.4],[560,8.3],[620,8.7],[723,8.8]];
  for (let t = 0; t < ROWS; t++) {
    const v = interp(heat, t) + (rnd() - 0.5) * 0.4;
    for (let x = 442; x < 449; x++) put(x, t, x === 442 ? 5 : v);
  }
  line(463, 1, 7.3, 0, 480, 1.6); line(462, 1, 5.6, 0, 480, 3);
  line(463, 1, 6.4, 480, 723, 2.4); line(462, 1, 4.6, 480, 723, 2);
  cloud(522, 527, 4.4, 0.8, 0.3, 0, 37);
  dash(543, 2, 4.1, 12, 175, 5, 6); dash(543, 2, 4.3, 230, 268, 6, 4);
  dash(484, 2, 3.9, 608, 723, 8, 6);
  line(579, 1, 4.8, 0, 723, 0.3, 0.2);
  dash(621, 1, 4.7, 45, 180, 5, 4); dash(621, 3, 5.2, 265, 340, 9, 4, 2); dash(621, 2, 4.5, 340, 430, 4, 5);
  dash(621, 2, 5.6, 430, 723, 9, 5, 2.4);
  dash(663, 1, 4.9, 0, 450, 10, 4); dash(663, 1, 7.8, 490, 723, 14, 5, 3); line(664, 1, 5, 560, 723);
  dash(675, 1, 4.4, 0, 340, 5, 12); dash(678, 2, 4.6, 0, 723, 9, 3, 1.6); dash(680, 1, 4.2, 0, 723, 9, 5);
  dash(687, 1, 5, 20, 60, 6, 3); dash(687, 1, 5, 325, 723, 6, 5); dash(693, 1, 4.8, 480, 723, 6, 4);
  for (let t = 0; t < 375; t++) {
    const hotRow = 0.5 + 0.2 * Math.sin(t / 40 + 2.5);
    for (let x = 695; x < 712; x++) {
      const hot = x < 707 || x % 3 === 0;
      const r = rnd();
      if (hot && r < hotRow) put(x, t, 8 + rnd() * 1.6);
      else if (r < 0.78) put(x, t, 4 + rnd() * 3);
    }
  }
  dash(714, 1, 8, 0, 450, 3, 4, 3);
  dash(695, 2, 5, 375, 440, 6, 4); dash(703, 1, 5, 375, 470, 6, 8); dash(709, 2, 6.5, 375, 445, 4, 6, 3);
  dash(698, 1, 8, 475, 600, 9, 6); dash(705, 2, 7.5, 525, 615, 8, 3, 3); dash(696, 2, 7, 560, 723, 7, 5, 3);
  cloud(696, 712, 7.5, 4, 0.28, 660, 723); dash(709, 1, 8, 640, 723, 6, 5);
  line(732, 2, 5.5, 0, 105, 0.7); line(732, 1, 4.3, 105, 723, 1); line(733, 1, 5.4, 130, 723, 1.2);
  line(736, 1, 7.4, 0, 238, 1.2); line(736, 1, 4.8, 150, 723, 0.6); line(737, 1, 4, 238, 723, 0.6);
  dash(752, 1, 4.5, 25, 380, 7, 6); dash(752, 1, 3.9, 380, 723, 5, 9);
  line(772, 1, 3.5, 0, 300, 0.5);
  line(803, 1, 4.9, 75, 265, 1); line(804, 2, 7.3, 0, 265, 0.6); line(806, 2, 7.1, 0, 265, 0.8); line(809, 1, 5.6, 0, 180, 0.8);
  for (let t = 0; t < 255; t++) put(807, t, 7.2 - t / 180);
  line(806, 1, 4.5, 290, 330); line(809, 1, 4.9, 305, 335); line(806, 4, 8.4, 332, 723, 0.6); line(805, 1, 5, 332, 723, 1.5); line(810, 1, 6.5, 590, 723, 1.5);
  line(799, 2, 3.8, 430, 655, 0.5);
  line(832, 1, 4.9, 0, 260, 0.3); line(832, 1, 4.3, 260, 723, 0.6);
  dash(855, 1, 3.8, 0, 100, 9, 9); dash(869, 1, 4, 0, 723, 8, 12); dash(860, 1, 3.8, 20, 160, 9, 6); dash(786, 3, 3.7, 630, 705, 4, 5);
  dash(876, 4, 3.5, 460, 510, 7, 4, 0.8);
  blip(765, 330, 6.4); blip(578, 560, 6); blip(819, 560, 5.4);

  // 40 m phone section
  for (const [a, b] of [[33,105],[120,165],[180,210],[222,245],[268,350],[370,440],[450,470],[512,578],[643,723]]) dash(941, 6, 5.1, a, b, 6, 3, 1.8);
  dash(959, 3, 4.4, 0, 132, 5, 5); dash(961, 6, 4.9, 170, 266, 5, 3, 1.8); dash(960, 4, 4.5, 282, 385, 7, 3);
  dash(960, 7, 5.3, 428, 523, 6, 2, 1.8); dash(959, 4, 4.5, 530, 640, 7, 5); dash(961, 6, 5.6, 643, 723, 5, 2, 2.4);
  dash(980, 5, 4.4, 122, 276, 5, 3); dash(981, 4, 4.7, 280, 388, 9, 3); dash(980, 5, 4.7, 400, 565, 6, 2); dash(985, 1, 4, 565, 723, 12, 6);
  line(973, 1, 3.5, 0, 723, 0.4); dash(1004, 2, 4.4, 545, 660, 7, 9); dash(1036, 1, 3.6, 0, 723, 12, 6, 0.6);

  cloud(1058, 1068, 4.2, 0.8, 0.05);
  cloud(1068, 1096, 4.1, 1.2, 0.26, 0, 133); cloud(1068, 1088, 4.3, 1.6, 0.4, 142, 723);
  cloud(1058, 1096, 4.5, 0.6, 0.6, 108, 133);
  am(1077, 5, 5.2, 1.7, 0.8, 0, 133); am(1077, 6, 5, 2.2, 0.9, 142, 723);
  gap(1058, 1096, 133, 142);
  cloud(1090, 1112, 3.9, 1.2, 0.1);
  cloud(1108, 1145, 4, 1.5, 0.3);
  am(1116, 3, 5.4, 1.3, 0.8, 0, 60); am(1115, 4, 5.9, 1, 0.8, 185, 446); am(1116, 2, 6.3, 1.4, 1, 446, 723);
  line(1066, 2, 6.2, 0, 723, 0.5, 0.6); line(1077, 1, 6.8, 0, 723, 1); line(1087, 1, 4.9, 0, 723, 0.4);
  dash(1096, 2, 7, 0, 723, 4, 5, 4); line(1107, 1, 7.4, 0, 723, 1.2); line(1117, 1, 7, 0, 723, 1);
  line(1137, 1, 7.2, 0, 723, 1.4); dash(1138, 2, 5.2, 0, 723, 5, 3, 1.8);

  cloud(1168, 1186, 4.1, 1.4, 0.3);
  am(1157, 10, 7.6, 1.8, 0.5, 0, 74); am(1157, 10, 8.3, 0.9, 0.3, 76, 148); gap(1143, 1172, 148, 156);
  am(1157, 10, 8.1, 1.2, 0.3, 156, 300); am(1157, 10, 7.5, 2.2, 0.5, 300, 600); am(1157, 10, 8, 1.5, 0.5, 600, 723);
  line(1156, 3, 9.7, 0, 723, 0.8); line(1146, 1, 6, 0, 148, 1); line(1146, 1, 6, 156, 723, 1);

  dash(1177, 2, 6, 0, 723, 4, 2, 4); line(1181, 1, 4.9); line(1187, 1, 4.9);
  cloud(1188, 1212, 4.05, 0.9, 0.5); cloud(1190, 1207, 4.35, 0.9, 0.3);
  line(1197, 1, 5.6, 0, 723, 2.4); line(1207, 1, 6.6, 0, 430, 1.6); line(1207, 2, 6.9, 430, 723, 1.2); line(1213, 1, 4.8, 0, 723, 0.6);
  cloud(1212, 1228, 4, 1, 0.03); cloud(1212, 1224, 3.7, 0.8, 0.12, 0, 120);
  line(1229, 1, 4.7, 0, 723, 0.3); line(1245, 1, 3.8, 0, 723, 0.5);

  // 7.3 MHz broadcast
  cloud(1268, 1308, 3.8, 1.4, 0.09, 0, 40); cloud(1268, 1312, 3.7, 1.4, 0.1, 65, 530); cloud(1272, 1308, 3.8, 1.4, 0.07, 550, 723);
  dash(1277, 1, 5.2, 0, 723, 8, 2, 1.4); cloud(1276, 1280, 4.3, 1, 0.25); dash(1287, 1, 6.8, 0, 723, 6, 1, 3); cloud(1285, 1291, 4.3, 1.2, 0.25);
  line(1307, 1, 4.9, 0, 723, 0.3);
  cloud(1322, 1342, 4, 1.4, 0.18); line(1327, 2, 5.6, 0, 723, 1.6); line(1337, 1, 7.6, 0, 723, 1.2); line(1339, 1, 6.6, 0, 723, 1.6);
  am(1358, 15, 6.6, 1.5, 0.5, 0, 142); gap(1340, 1376, 142, 163);
  cloud(1344, 1374, 4.8, 1, 0.5, 163, 170);
  am(1358, 15, 6.7, 1.3, 0.5, 168, 230); am(1358, 15, 6, 2.1, 0.6, 230, 480); am(1358, 15, 6.3, 2, 0.6, 480, 723);
  am(1358, 3, 7.2, 2, 1, 168, 723);
  line(1357, 3, 9.8, 0, 723, 0.6); line(1378, 1, 7.6, 0, 723, 1.2); line(1377, 1, 5, 0, 723, 1.5);
  cloud(1379, 1392, 4, 1.4, 0.04);

  cloud(1408, 1424, 3.6, 0.8, 0.03); cloud(1432, 1480, 3.6, 1.3, 0.12); cloud(1440, 1472, 3.8, 1.2, 0.1);
  dash(1428, 1, 7, 0, 723, 9, 2, 3); cloud(1426, 1431, 4.4, 1, 0.12);
  line(1449, 1, 4.9, 0, 723, 1.8); line(1452, 2, 5.1, 0, 723, 1.4); dash(1468, 2, 6, 0, 723, 9, 3, 3);
  line(1490, 1, 5.9, 0, 723, 0.8); line(1498, 1, 4.9, 0, 723, 0.4);
  for (const [a, b] of [[0,30],[40,60],[64,176],[184,200],[204,236],[248,330],[336,378],[392,536],[552,606],[612,723]]) {
    cloud(1502, 1516, 4.4, 1.4, 0.2, a, b); am(1508, 3, 6.8, 2.8, 1.8, a, b);
  }
  line(1508, 1, 8.8, 0, 723, 0.8);
  cloud(1524, 1546, 3.7, 1.4, 0.12); line(1528, 1, 4.7, 0, 723, 0.5); line(1538, 1, 5.6, 0, 723, 2.4); cloud(1534, 1544, 4.1, 1.2, 0.16);
  cloud(1540, 1547, 4, 1, 0.4, 620, 655);

  line(1558, 1, 4.9, 0, 723, 0.3);
  cloud(1614, 1619, 3.6, 0.9, 0.32);
  for (let t = 0; t < ROWS; t++) {
    const yel = t < 520 ? 5.7 : 5.1;
    put(1624 + (t % 4 < 2 ? 0 : 1), t, yel + rnd() * (t > 200 && t < 480 ? 1 : 0.3));
    if (t % 4 < 2) put(1750, t, t % 12 < 8 ? 4.4 : 3);
    if ((t + 1) % 4 < 2) put(1751, t, rnd() < 0.6 ? 4.4 : 2);
  }
  line(1632, 1, 3.8, 155, 330, 0.5); line(1632, 1, 5.4, 330, 723, 0.6);
  line(1638, 2, 4.8, 0, 52, 0.8); line(1639, 1, 3.8, 60, 180, 0.6); line(1638, 2, 4.5, 180, 723, 0.8);
  cloud(1634, 1656, 4.4, 1.2, 0.012); cloud(1641, 1649, 4.6, 1, 0.1);
  line(1644, 2, 7, 0, 723, 0.5, 0.9);
  for (const t of [32, 100, 168, 235, 303, 370, 438, 505, 573, 640, 708]) dash(1676, 1, 3.8, t, t + 15, 4, 3);
  blip(1701, 405, 4.9, 6); blip(1548, 388, 4.8, 6); blip(1009, 354, 6.6); blip(973, 394, 6.6); blip(1096, 364, 7.4, 6);
  blip(1378, 361, 6, 7); blip(1267, 552, 5.5, 6); blip(1050, 317, 4.9, 6);
  for (let t = 537; t < 560; t++) for (let x = 1694; x < 1740; x++) lift(x, t, 1.7 + 0.35 * Math.cos(x * 0.65));
  for (let t = 565; t < 588; t++) for (let x = 1680; x < 1730; x++) lift(x, t, 1.9);
  for (let t = 592; t < 615; t++) for (let x = 1575; x < 1612; x++) lift(x, t, 2);
}

function drawWaterfall() {
  background();
  signals();
  const g = document.getElementById("waterfall").getContext("2d");
  const img = g.createImageData(BINS, ROWS), d = img.data;
  for (let k = 0; k < cell.length; k++) {
    const v = Math.min(11.99, Math.max(0, cell[k])), i = v | 0, f = v - i;
    const dim = Math.min(1, 0.55 + v * 0.5);
    for (let c = 0; c < 3; c++) d[k * 4 + c] = (ramp[i][c] + (ramp[i + 1][c] - ramp[i][c]) * f) * dim;
    d[k * 4 + 3] = 255;
  }
  g.putImageData(img, 0, 0);
}

drawSpectrum();
drawWaterfall();
```
